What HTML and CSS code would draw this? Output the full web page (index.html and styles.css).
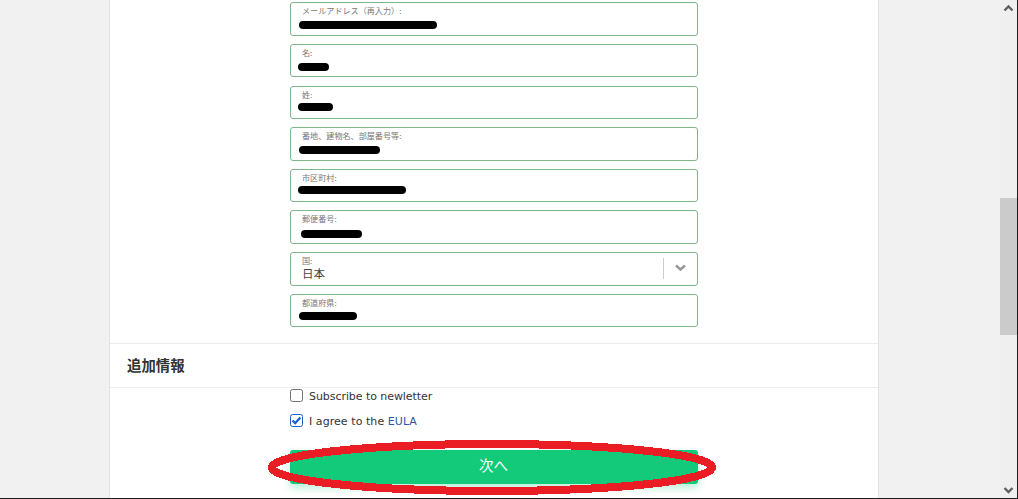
FILE: index.html
```html
<!DOCTYPE html>
<html lang="ja">
<head>
    <meta charset="UTF-8">
    <meta name="viewport" content="width=device-width, initial-scale=1.0">
    <title>追加情報</title>
    <link rel="stylesheet" href="styles.css">
</head>
<body>
    <div class="window">
        <div class="page">
            <div class="container">
                <div class="fields">
                    <div class="field">
                        <label>メールアドレス（再入力）:</label>
                        <span class="mask mask-email"></span>
                    </div>
                    <div class="field">
                        <label>名:</label>
                        <span class="mask mask-first"></span>
                    </div>
                    <div class="field">
                        <label>姓:</label>
                        <span class="mask mask-last"></span>
                    </div>
                    <div class="field">
                        <label>番地、建物名、部屋番号等:</label>
                        <span class="mask mask-street"></span>
                    </div>
                    <div class="field">
                        <label>市区町村:</label>
                        <span class="mask mask-city"></span>
                    </div>
                    <div class="field">
                        <label>郵便番号:</label>
                        <span class="mask mask-zip"></span>
                    </div>
                    <div class="field select">
                        <div class="select-text">
                            <label>国:</label>
                            <div class="value">日本</div>
                        </div>
                        <div class="arrow">
                            <svg width="12" height="8" viewBox="0 0 12 8"><path d="M1 1.5L5.5 5.5L10 1.5" fill="none" stroke="#999" stroke-width="2.5"/></svg>
                        </div>
                    </div>
                    <div class="field">
                        <label>都道府県:</label>
                        <span class="mask mask-state"></span>
                    </div>
                </div>

                <h2>追加情報</h2>

                <div class="extra">
                    <div class="check">
                        <span class="box"></span>
                        <span class="subscribe">Subscribe to newletter</span>
                    </div>
                    <div class="check">
                        <span class="box checked">
                            <svg width="11" height="11" viewBox="0 0 11 11"><path d="M1.5 5.5L4.2 8.2L9.3 2.5" fill="none" stroke="#1c5cc8" stroke-width="2.3"/></svg>
                        </span>
                        <span class="agree">I agree to the <a>EULA</a></span>
                    </div>
                    <div class="next">
                        <div class="button">次へ</div>
                        <svg class="marker" width="450" height="57" viewBox="0 0 450 57"><ellipse cx="225" cy="28.5" rx="220" ry="23.5" fill="none" stroke="#ea1c24" stroke-width="8" shape-rendering="crispEdges"/></svg>
                    </div>
                </div>
            </div>
        </div>

        <div class="scrollbar">
            <svg width="17" height="17" viewBox="0 0 17 17"><path d="M4.5 10.5L8.5 6.5L12.5 10.5" fill="none" stroke="#606060" stroke-width="2.4"/></svg>
            <div class="thumb"></div>
            <svg width="17" height="17" viewBox="0 0 17 17"><path d="M4.5 7L8.5 11L12.5 7" fill="none" stroke="#606060" stroke-width="2.4"/></svg>
        </div>
    </div>
</body>
</html>
```

FILE: styles.css
```css
* {
    box-sizing: border-box;
}
body {
    margin: 0;
    font-family: "DejaVu Sans", "Noto Sans CJK JP", sans-serif;
    font-size: 11px;
    color: #333;
    overflow: hidden;
}
.window {
    display: flex;
    height: 499px;
    border-right: 1px solid #1c1c1c;
    border-bottom: 1px solid #1c1c1c;
    overflow: hidden;
}
.page {
    flex: 1;
    background: #f1f1f1;
    padding-left: 109px;
}
.container {
    width: 770px;
    height: 498px;
    background: #fff;
    border-left: 1px solid #e2e2e2;
    border-right: 1px solid #e2e2e2;
}
.fields {
    display: flex;
    flex-direction: column;
    gap: 8.17px;
    width: 408px;
    margin-left: 180px;
    padding-top: 2.2px;
    height: 343px;
}
.field {
    position: relative;
    height: 33.5px;
    flex-shrink: 0;
    padding: 3px 0 0 11px;
    border: 1px solid #7fb58a;
    border-radius: 3px;
    background: #fff;
}
.field label {
    display: block;
    font-family: "Noto Sans CJK JP", sans-serif;
    font-size: 8.1px;
    line-height: 9px;
    color: #777;
}
.select {
    display: flex;
    justify-content: space-between;
}
.value {
    font-family: "Noto Sans CJK JP", sans-serif;
    font-size: 11.5px;
    line-height: 16px;
    color: #444;
}
.arrow {
    display: flex;
    align-items: center;
    justify-content: center;
    width: 34px;
    height: 21px;
    margin-top: 2px;
    padding-bottom: 1px;
    border-left: 1px solid #ccc;
}
/* blacked out values */
.mask {
    position: absolute;
    left: 8px;
    top: 18px;
    height: 8px;
    border-radius: 4px;
    background: #000;
}
.mask-email {
    width: 138px;
}
.mask-first {
    left: 7px;
    width: 31px;
}
.mask-last {
    left: 7px;
    top: 16px;
    width: 35px;
}
.mask-street {
    width: 81px;
}
.mask-city {
    left: 7px;
    top: 16px;
    width: 108px;
}
.mask-zip {
    left: 10px;
    top: 19px;
    width: 61px;
}
.mask-state {
    top: 17px;
    width: 58px;
}
h2 {
    margin: 0;
    height: 45px;
    padding-left: 17px;
    border-top: 1px solid #ededed;
    border-bottom: 1px solid #ededed;
    font-family: "Noto Sans CJK JP", sans-serif;
    font-size: 14.4px;
    font-weight: bold;
    line-height: 41px;
}
.extra {
    width: 408px;
    margin-left: 180px;
}
.check {
    display: flex;
    align-items: center;
    gap: 6px;
    height: 15px;
    margin-bottom: 10px;
}
.subscribe,
.agree {
    padding-top: 2px;
}
.subscribe {
    letter-spacing: -0.06px;
}
.agree {
    letter-spacing: 0.06px;
}
.check a {
    color: #2f55a8;
}
.box {
    display: flex;
    align-items: center;
    justify-content: center;
    width: 13px;
    height: 13px;
    border: 1px solid #707078;
    border-radius: 2.5px;
}
.checked {
    border-color: #1c5cc8;
}
.next {
    position: relative;
    margin-top: 22px;
}
.button {
    height: 34px;
    padding-right: 1px;
    border-radius: 3px;
    background: #13ca7a;
    box-shadow: 0 4px 8px rgba(19, 202, 122, 0.3);
    color: #fff;
    font-family: "Noto Sans CJK JP", sans-serif;
    font-size: 14.5px;
    line-height: 30px;
    text-align: center;
}
.marker {
    position: absolute;
    left: -23px;
    top: -11px;
}
.scrollbar {
    display: flex;
    flex-direction: column;
    justify-content: space-between;
    width: 17px;
    background: #efefef;
}
.thumb {
    height: 137px;
    margin-top: 35px;
    background: #cbcbcb;
}
```
